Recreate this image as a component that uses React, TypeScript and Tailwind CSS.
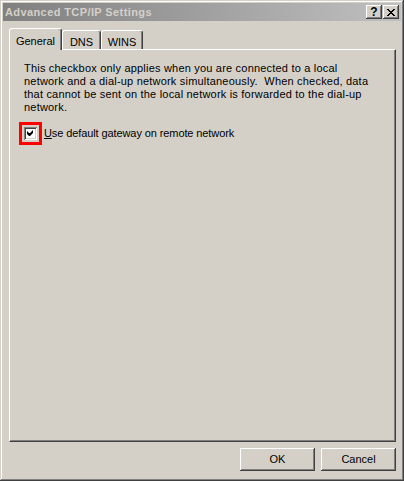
import React from "react";

const raised =
  "shadow-[inset_-1px_-1px_#404040,inset_1px_1px_#ffffff,inset_-2px_-2px_#808080,inset_2px_2px_#d4d0c8]";

const TitleButton: React.FC<{ children: React.ReactNode }> = ({ children }) => (
  <div
    className={`w-[16px] h-[14px] bg-[#d4d0c8] flex items-center justify-center text-black ${raised}`}
  >
    {children}
  </div>
);

const Tab: React.FC<{ label: string; active?: boolean; width: string }> = ({ label, active, width }) =>
  active ? (
    <div
      className={`${width} h-[22px] -mb-px relative z-10 bg-[#d4d0c8] border-t border-l border-white border-r border-r-[#404040] rounded-t-[3px] shadow-[inset_-1px_0_#808080] flex items-start justify-center pt-[4px] text-black`}
    >
      {label}
    </div>
  ) : (
    <div
      className={`${width} h-[19px] bg-[#d4d0c8] border-t border-l border-white border-r border-r-[#404040] rounded-t-[3px] shadow-[inset_-1px_0_#808080] flex items-start justify-center pt-[3px] text-black`}
    >
      {label}
    </div>
  );

const PushButton: React.FC<{ label: string }> = ({ label }) => (
  <button
    className={`w-[75px] h-[23px] bg-[#d4d0c8] text-black text-[11px] flex items-center justify-center ${raised}`}
  >
    {label}
  </button>
);

export default function App() {
  return (
    <div
      className="w-[404px] h-[481px] bg-[#d4d0c8] p-[3px] flex flex-col shadow-[inset_-1px_-1px_#404040,inset_1px_1px_#d4d0c8,inset_-2px_-2px_#808080,inset_2px_2px_#ffffff] text-[11px] text-black"
      style={{ fontFamily: "'Liberation Sans', Arial, sans-serif" }}
    >
      {/* Title bar (inactive) */}
      <div className="h-[18px] flex items-center bg-gradient-to-r from-[#808080] to-[#c0c0c0] pl-[2px] pr-[2px]">
        <span className="font-bold text-[#d4d0c8] tracking-[0.4px] leading-none">
          Advanced TCP/IP Settings
        </span>
        <div className="ml-auto flex gap-[1px]">
          <TitleButton>
            <span className="font-bold text-[12px] leading-none">?</span>
          </TitleButton>
          <TitleButton>
            <svg width="8" height="7" viewBox="0 0 8 7">
              <path d="M0 0h2v1h1v1h2V1h1V0h2v1H7v1H6v1H5v1h1v1h1v1h1v1H6V6H5V5H3v1H2v1H0V6h1V5h1V4h1V3H2V2H1V1H0z" fill="#000" />
            </svg>
          </TitleButton>
        </div>
      </div>

      {/* Body */}
      <div className="flex-1 flex flex-col pl-[6px] pr-[5px] pt-[7px]">
        {/* Tab strip */}
        <div className="h-[21px] flex items-end">
          <Tab label="General" active width="w-[53px]" />
          <Tab label="DNS" width="w-[39px]" />
          <Tab label="WINS" width="w-[42px]" />
        </div>

        {/* Tab panel */}
        <div className="h-[393px] border-t border-l border-white border-r border-b border-r-[#404040] border-b-[#404040] shadow-[inset_-1px_-1px_#808080] pl-[14px] pt-[12px]">
          <p className="leading-[13px] whitespace-pre tracking-[0.2px]">
            This checkbox only applies when you are connected to a local{"\n"}
            network and a dial-up network simultaneously.  When checked, data{"\n"}
            that cannot be sent on the local network is forwarded to the dial-up{"\n"}
            network.
          </p>

          <div className="flex items-center mt-[8px] -ml-[5px]">
            <span className="border-[3px] border-[#ff0000] p-[2px] flex">
              <span className="w-[13px] h-[13px] bg-white flex items-center justify-center shadow-[inset_1px_1px_#808080,inset_-1px_-1px_#ffffff,inset_2px_2px_#404040,inset_-2px_-2px_#d4d0c8]">
                <svg width="7" height="7" viewBox="0 0 7 7">
                  <path d="M6 0v3L3 6H2L0 4V1l2 2h1z" fill="#000" />
                </svg>
              </span>
            </span>
            <span className="ml-[2px] leading-[13px] tracking-[-0.1px]">
              <span className="underline">U</span>se default gateway on remote network
            </span>
          </div>
        </div>

        {/* Dialog buttons */}
        <div className="flex justify-end gap-[6px] mt-[6px]">
          <PushButton label="OK" />
          <PushButton label="Cancel" />
        </div>
      </div>
    </div>
  );
}
